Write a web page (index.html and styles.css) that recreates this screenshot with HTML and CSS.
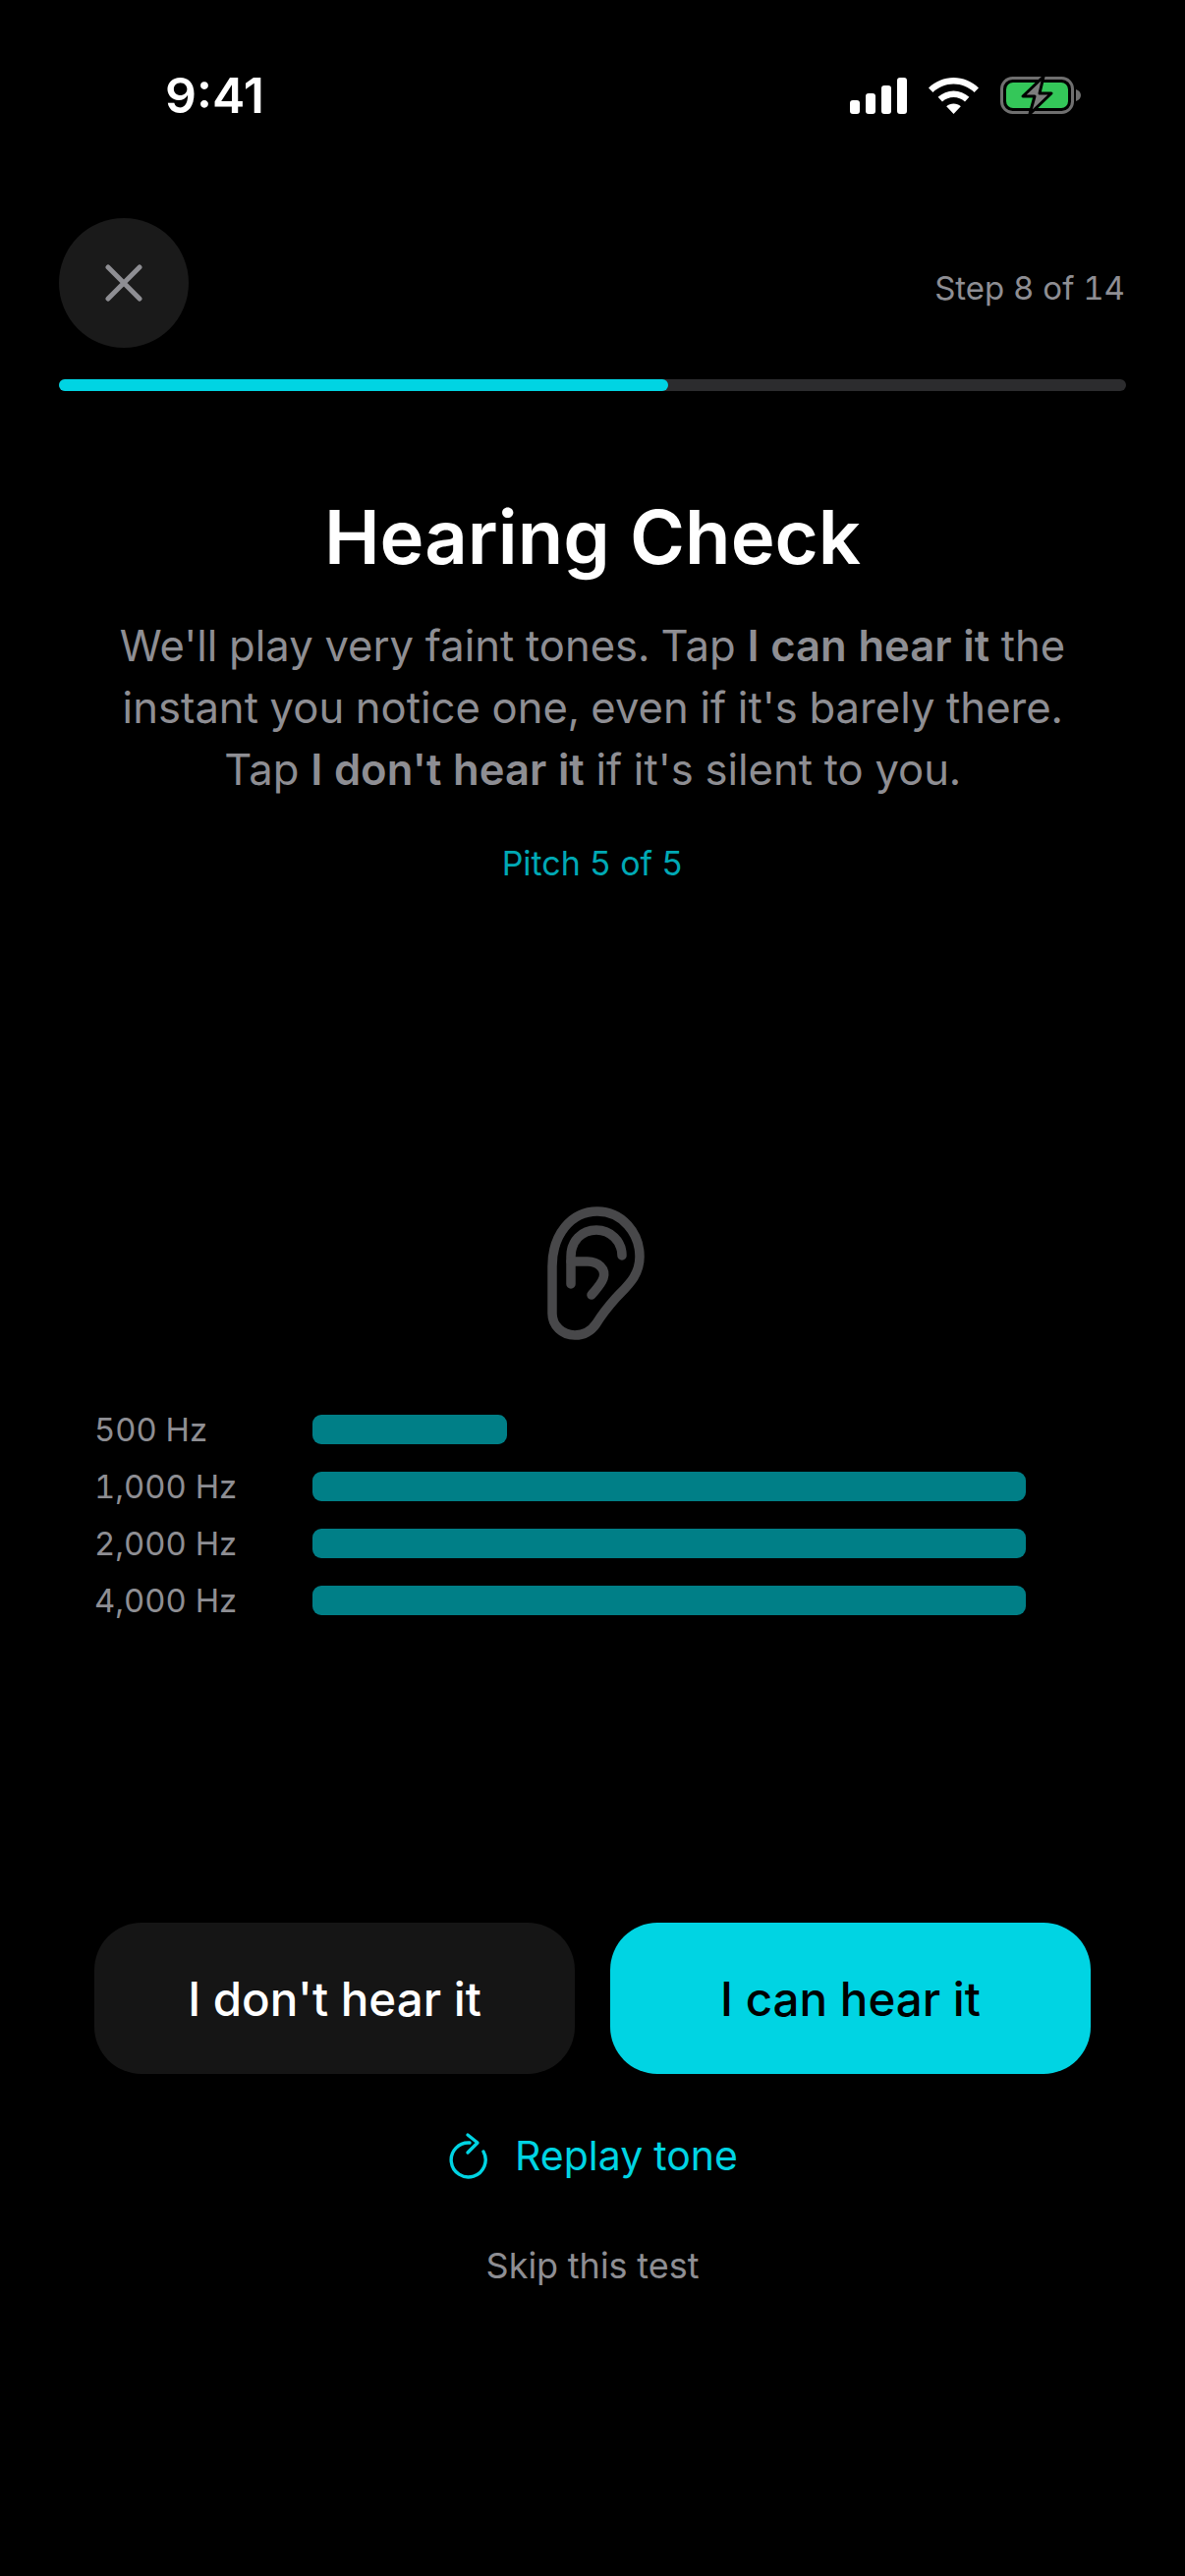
FILE: index.html
```html
<!DOCTYPE html>
<html lang="en">
<head>
  <meta charset="UTF-8" />
  <meta name="viewport" content="width=device-width, initial-scale=1.0"/>
  <title>Hearing Check</title>
  <link rel="stylesheet" href="styles.css">
</head>
<body>
  <!-- Status bar -->
  <div class="status-bar">
    <span class="time">9:41</span>
    <div class="status-icons">
      <svg class="signal" width="58" height="37" viewBox="0 0 58 37" fill="#fff">
        <rect x="0" y="23" width="10" height="14" rx="3"/>
        <rect x="16" y="16" width="10" height="21" rx="3"/>
        <rect x="32" y="8" width="10" height="29" rx="3"/>
        <rect x="48" y="0" width="10" height="37" rx="3"/>
      </svg>
      <svg class="wifi" width="51" height="37" viewBox="0 0 51 37" fill="#fff">
        <path d="M25.5 0C35 0 44 3.8 51 10.4L46.6 15C40.9 9.6 33.4 6.5 25.5 6.5S10.100 9.600 4.400 15L0 10.400C7 3.800 16 0 25.500 0Z"/>
        <path d="M25.500 13.500C31.500 13.500 37 15.800 41.400 19.800L37 24.400C33.800 21.500 29.800 19.900 25.500 19.900S17.200 21.500 14 24.400L9.600 19.800C14 15.800 19.500 13.500 25.500 13.500Z"/>
        <path d="M25.500 26.500C28.300 26.500 30.800 27.500 32.800 29.300L25.500 37L18.200 29.300C20.200 27.500 22.700 26.500 25.500 26.500Z"/>
      </svg>
      <svg class="battery" width="82" height="42" viewBox="0 0 82 42">
        <rect x="1.500" y="3.500" width="72" height="35" rx="11" fill="none" stroke="#6f6f6f" stroke-width="3"/>
        <rect x="6" y="8" width="63" height="26" rx="7" fill="#34c759"/>
        <path d="M77 15C80 16 82 18 82 21S80 26 77 27Z" fill="#6f6f6f"/>
        <path d="M44 2L23 22H35L30 40L52 19H40Z" fill="#7d7d7d" stroke="#000" stroke-width="3" stroke-linejoin="round"/>
      </svg>
    </div>
  </div>

  <div class="top-row">
    <button class="close-btn">
      <svg width="38" height="38" viewBox="0 0 38 38" fill="none" stroke="#8e8e93" stroke-width="5" stroke-linecap="round">
        <path d="M3 3L35 35M35 3L3 35"/>
      </svg>
    </button>
    <span class="step">Step 8 of 14</span>
  </div>

  <div class="progress"><div class="progress-fill" style="width: 57.1%"></div></div>

  <h1>Hearing Check</h1>
  <p class="intro">We'll play very faint tones. Tap <strong>I can hear it</strong> the<br>instant you notice one, even if it's barely there.<br>Tap <strong>I don't hear it</strong> if it's silent to you.</p>
  <div class="pitch">Pitch 5 of 5</div>

  <div class="ear">
    <svg width="100" height="140" viewBox="55 26 100 140" fill="none" stroke="#48484a" stroke-width="9.500" stroke-linecap="round" stroke-linejoin="round">
      <path d="M61 90C61 58 80 34 107 34C132 34 150 56 150 80C150 100 137 110 125 123C117 132 111 140 106 148C100 157 93 160 84 160C71 160 61 150 61 138Z"/>
      <path d="M80 108V80C80 64 91 53 106 53C120 53 132 64 132 79"/>
      <path d="M80 85H97C108 85 116 93 113 102C111 108 106 113 101 119"/>
    </svg>
  </div>

  <div class="levels">
    <div class="level"><span class="level-label">500 Hz</span><div class="level-bar" style="width: 198px"></div></div>
    <div class="level"><span class="level-label">1,000 Hz</span><div class="level-bar" style="width: 726px"></div></div>
    <div class="level"><span class="level-label">2,000 Hz</span><div class="level-bar" style="width: 726px"></div></div>
    <div class="level"><span class="level-label">4,000 Hz</span><div class="level-bar" style="width: 726px"></div></div>
  </div>

  <div class="answers">
    <button class="answer no">I don't hear it</button>
    <button class="answer yes">I can hear it</button>
  </div>

  <div class="replay">
    <svg width="44" height="48" viewBox="0 0 44 48" fill="none" stroke="#00d4e3" stroke-width="3.400" stroke-linecap="round" stroke-linejoin="round">
      <path d="M23 11A17.500 17.500 0 1 0 37 20"/>
      <path d="M21 3L31 11L21 21"/>
    </svg>
    <span>Replay tone</span>
  </div>

  <div class="skip">Skip this test</div>
</body>
</html>
```

FILE: styles.css
```css
body {
  margin: 0;
  height: 2622px;
  overflow: hidden;
  background-color: #000;
  color: #fff;
  font-family: Inter, "Liberation Sans", sans-serif;
  font-variant-numeric: tabular-nums;
}

/* Status bar */
.status-bar {
  display: flex;
  justify-content: space-between;
  align-items: center;
  height: 42px;
  padding: 76px 106px 0 168px;
}

.time {
  font-size: 50px;
  font-weight: 600;
  font-variant-numeric: normal;
}

.status-icons {
  display: flex;
  align-items: center;
  gap: 22px;
}

.top-row {
  display: flex;
  justify-content: space-between;
  align-items: center;
  margin-top: 104px;
  padding: 0 61px 0 60px;
}

.close-btn {
  display: flex;
  align-items: center;
  justify-content: center;
  width: 132px;
  height: 132px;
  padding: 0;
  border: none;
  border-radius: 50%;
  background-color: #1a1a1a;
}

.step {
  margin-top: 10px;
  font-size: 33px;
  color: #8e8e93;
}

.progress {
  height: 12px;
  margin: 32px 60px 0;
  border-radius: 6px;
  background-color: #2c2c2e;
}

.progress-fill {
  height: 100%;
  border-radius: 6px;
  background-color: #00d4e3;
}

h1 {
  margin: 98px 0 0;
  text-align: center;
  font-size: 76px;
  line-height: 100px;
  font-weight: 600;
}

.intro {
  margin: 30px 0 0;
  text-align: center;
  font-size: 43.600px;
  line-height: 63px;
  color: #8e8e93;
}

.intro strong {
  font-weight: 600;
}

.pitch {
  margin-top: 40px;
  text-align: center;
  font-size: 34px;
  line-height: 48px;
  color: #00a9b5;
}

.ear {
  display: flex;
  justify-content: center;
  margin-top: 322px;
  padding-left: 6px;
}

.levels {
  display: flex;
  flex-direction: column;
  gap: 28px;
  margin-top: 75px;
  padding-left: 96px;
}

.level {
  display: flex;
  align-items: center;
  height: 30px;
}

.level-label {
  width: 222px;
  font-size: 32.800px;
  color: #8e8e93;
}

.level-bar {
  height: 30px;
  border-radius: 9px;
  background-color: #007f87;
}

.answers {
  display: flex;
  gap: 36px;
  margin-top: 313px;
  padding: 0 96px;
}

.answer {
  flex: 1;
  height: 154px;
  border: none;
  border-radius: 48px;
  font-family: inherit;
  font-size: 47.500px;
  font-weight: 500;
}

.no {
  background-color: #151515;
  color: #fff;
}

.yes {
  background-color: #00d4e3;
  color: #000;
}

.replay {
  display: flex;
  justify-content: center;
  align-items: center;
  gap: 25px;
  margin-top: 58px;
  font-size: 41px;
  color: #00d4e3;
}

.skip {
  margin-top: 65px;
  text-align: center;
  font-size: 36px;
  color: #8e8e93;
}
```
